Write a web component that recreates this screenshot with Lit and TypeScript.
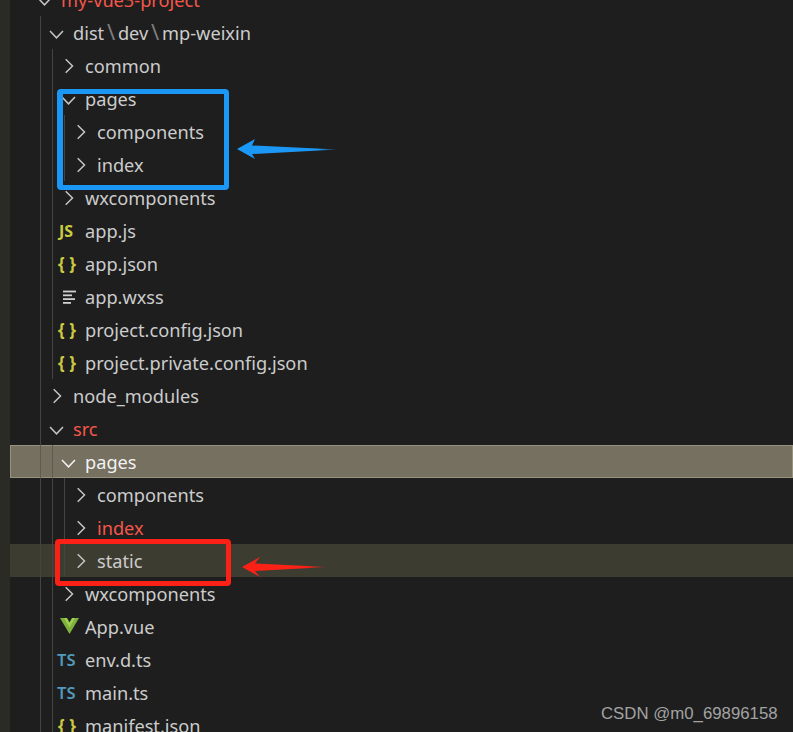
import { LitElement, css, html, svg, nothing } from "lit";
import { customElement } from "lit/decorators.js";

type Kind = "open" | "closed" | "js" | "json" | "lines" | "vue" | "ts";

interface Row {
  name: string;
  depth: number;
  kind: Kind;
  git?: boolean;
  state?: "selected" | "hover";
}

const ROWS: Row[] = [
  { name: "my-vue3-project", depth: 0, kind: "open", git: true },
  { name: "dist\\dev\\mp-weixin", depth: 1, kind: "open" },
  { name: "common", depth: 2, kind: "closed" },
  { name: "pages", depth: 2, kind: "open" },
  { name: "components", depth: 3, kind: "closed" },
  { name: "index", depth: 3, kind: "closed" },
  { name: "wxcomponents", depth: 2, kind: "closed" },
  { name: "app.js", depth: 2, kind: "js" },
  { name: "app.json", depth: 2, kind: "json" },
  { name: "app.wxss", depth: 2, kind: "lines" },
  { name: "project.config.json", depth: 2, kind: "json" },
  { name: "project.private.config.json", depth: 2, kind: "json" },
  { name: "node_modules", depth: 1, kind: "closed" },
  { name: "src", depth: 1, kind: "open", git: true },
  { name: "pages", depth: 2, kind: "open", state: "selected" },
  { name: "components", depth: 3, kind: "closed" },
  { name: "index", depth: 3, kind: "closed", git: true },
  { name: "static", depth: 3, kind: "closed", state: "hover" },
  { name: "wxcomponents", depth: 2, kind: "closed" },
  { name: "App.vue", depth: 2, kind: "vue" },
  { name: "env.d.ts", depth: 2, kind: "ts" },
  { name: "main.ts", depth: 2, kind: "ts" },
  { name: "manifest.json", depth: 2, kind: "json" },
];

@customElement("app-root")
export class AppRoot extends LitElement {
  private _icon(kind: Kind) {
    switch (kind) {
      case "open":
        return html`<svg class="ico" viewBox="0 0 24 24">
          <polyline class="chev" points="5,10 11.5,16.8 18,10" />
        </svg>`;
      case "closed":
        return html`<svg class="ico" viewBox="0 0 24 24">
          <polyline class="chev" points="8.7,5.3 15.5,12 8.7,18.7" />
        </svg>`;
      case "js":
        return html`<span class="badge js">JS</span>`;
      case "json":
        return html`<span class="badge json"><b>{</b><b>}</b></span>`;
      case "ts":
        return html`<span class="badge ts">TS</span>`;
      case "lines":
        return html`<svg class="ico" viewBox="0 0 24 24">
          ${[
            [6, 6.5, 19],
            [6, 10.3, 15],
            [6, 14.1, 18],
            [6, 17.9, 14],
          ].map(
            ([x, y, end]) =>
              svg`<line x1=${x} y1=${y} x2=${end} y2=${y} stroke="#d0d0d0" stroke-width="1.8" />`,
          )}
        </svg>`;
      case "vue":
        return html`<svg class="ico" viewBox="0 0 24 24">
          <polygon fill="#7fb13f" points="3,3 22,3 12.5,19" />
          <polygon fill="#a0d050" points="7,3 18,3 12.5,12.5" />
          <polygon fill="#1e1e1e" points="10,3 15,3 12.5,7.5" />
        </svg>`;
    }
  }

  private _row(r: Row) {
    const guides = Array.from({ length: r.depth }, (_, i) => 40 + i * 12);
    return html`<div
      class="row ${r.state ?? ""}"
      style="padding-left:${33 + r.depth * 12 - 10}px"
    >
      ${guides.map(
        (x) => html`<i class="guide" style="left:${x - 10}px"></i>`,
      )}
      <span class="slot">${this._icon(r.kind)}</span>
      <span class="name ${r.git ? "git" : ""}"
        >${r.name.includes("\\")
          ? r.name
              .split("\\")
              .map(
                (p, i) =>
                  html`${i ? html`<span class="sep">\\</span>` : nothing}${p}`,
              )
          : r.name}</span
      >
    </div>`;
  }

  render() {
    return html`
      <div class="tree">${ROWS.map((r) => this._row(r))}</div>

      <div class="mark blue"></div>
      <div class="mark red"></div>
      <svg class="arrows" viewBox="0 0 793 732">
        <defs>
          <linearGradient id="fadeBlue" x1="0" x2="1" y1="0" y2="0">
            <stop offset="0.8" stop-color="#1b98f5" />
            <stop offset="1" stop-color="#1b98f5" stop-opacity="0.15" />
          </linearGradient>
          <linearGradient id="fadeRed" x1="0" x2="1" y1="0" y2="0">
            <stop offset="0.75" stop-color="#fb2116" />
            <stop offset="1" stop-color="#fb2116" stop-opacity="0.15" />
          </linearGradient>
        </defs>
        <polygon
          fill="url(#fadeBlue)"
          points="237,149 255,139 252,145.5 338,149.5 252,154 255,159"
        />
        <polygon
          fill="url(#fadeRed)"
          points="242,567 260,557 255,563.5 328,567 255,571 260,577"
        />
      </svg>

      <div class="watermark">CSDN @m0_69896158</div>
    `;
  }

  static styles = css`
    :host {
      display: block;
      position: relative;
      height: 732px;
      overflow: hidden;
      background: #1e1e1e;
      border-left: 10px solid #2a2b25;
      box-sizing: border-box;
      font-family: "Noto Sans", sans-serif;
    }
    .tree {
      margin-top: -17px;
    }
    .row {
      position: relative;
      display: flex;
      align-items: center;
      height: 33px;
      box-sizing: border-box;
      font-size: 18.2px;
      color: #cccccc;
    }
    .row.selected {
      background: #75705f;
      box-shadow: inset 0 0 0 1px #96927f;
      color: #f2f2f2;
    }
    .row.hover {
      background: #3d3c31;
    }
    .guide {
      position: absolute;
      top: 0;
      bottom: 0;
      width: 1px;
      background: #444442;
    }
    .selected .guide {
      background: #5f5c50;
    }
    .slot {
      flex: none;
      width: 28px;
      height: 24px;
      display: flex;
      align-items: center;
    }
    .ico {
      width: 24px;
      height: 24px;
      display: block;
    }
    .chev {
      fill: none;
      stroke: #c5c5c5;
      stroke-width: 1.5;
    }
    .selected .chev {
      stroke: #f2f2f2;
    }
    .name {
      white-space: nowrap;
    }
    .git {
      color: #f5564a;
    }
    .sep {
      color: #7d7d7d;
      font-size: 22px;
      line-height: 1;
      margin: 0 2.8px;
    }
    .badge {
      box-sizing: border-box;
      width: 24px;
      line-height: 24px;
      white-space: nowrap;
    }
    .js {
      color: #cbcb41;
      font-size: 16px;
      font-weight: 700;
      padding-left: 2px;
    }
    .json {
      color: #cbcb41;
      font-size: 17px;
      display: flex;
      justify-content: space-between;
      padding: 0 5px 0 1px;
    }
    .json b {
      font-weight: 700;
    }
    .ts {
      color: #519aba;
      font-size: 16.5px;
      font-weight: 600;
    }
    .mark {
      position: absolute;
      box-sizing: border-box;
      border-radius: 4px;
      border: 5px solid;
    }
    .mark.blue {
      left: 47px;
      top: 89px;
      width: 172px;
      height: 101px;
      border-left-width: 6px;
      border-color: #1b98f5;
    }
    .mark.red {
      left: 45px;
      top: 539px;
      width: 176px;
      height: 47px;
      border-color: #fb2116;
    }
    .arrows {
      position: absolute;
      left: -10px;
      top: 0;
      width: 793px;
      height: 732px;
      pointer-events: none;
    }
    .watermark {
      position: absolute;
      left: 591px;
      top: 704px;
      font-family: "Liberation Sans", sans-serif;
      font-size: 16.8px;
      line-height: 20px;
      color: #a3a3a3;
      white-space: nowrap;
    }
  `;
}
